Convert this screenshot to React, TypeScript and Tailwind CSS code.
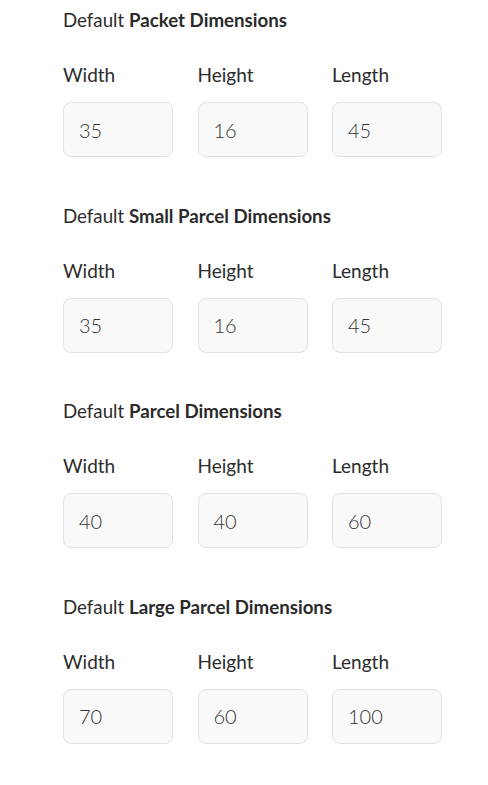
import React from "react";

type Section = {
  name: string;
  values: [string, string, string];
};

const sections: Section[] = [
  { name: "Packet Dimensions", values: ["35", "16", "45"] },
  { name: "Small Parcel Dimensions", values: ["35", "16", "45"] },
  { name: "Parcel Dimensions", values: ["40", "40", "60"] },
  { name: "Large Parcel Dimensions", values: ["70", "60", "100"] },
];

const labels = ["Width", "Height", "Length"];

function DimensionGroup({ name, values }: Section) {
  return (
    <div className="h-[195.5px] pt-[8px]">
      <h3 className="text-[18.7px] leading-[24px] text-[#2b2b2b]">
        Default <span className="font-bold">{name}</span>
      </h3>
      <div className="mt-[31px] flex gap-x-[24.5px]">
        {labels.map((label, i) => (
          <div key={label} className="w-[110px]">
            <label className="block text-[19px] leading-[24px] text-[#2b2b2b]">
              {label}
            </label>
            <input
              readOnly
              value={values[i]}
              className="mt-[15px] h-[55px] w-full rounded-[8px] border border-[#e2e2e2] bg-[#f9f9f9] px-[15px] text-[20px] font-light text-[#333333] outline-none"
            />
          </div>
        ))}
      </div>
    </div>
  );
}

export default function App() {
  return (
    <div
      className="min-h-[785px] w-[488px] bg-white pl-[63px]"
      style={{ fontFamily: "Lato, 'Open Sans', sans-serif" }}
    >
      {sections.map((s) => (
        <DimensionGroup key={s.name} {...s} />
      ))}
    </div>
  );
}
